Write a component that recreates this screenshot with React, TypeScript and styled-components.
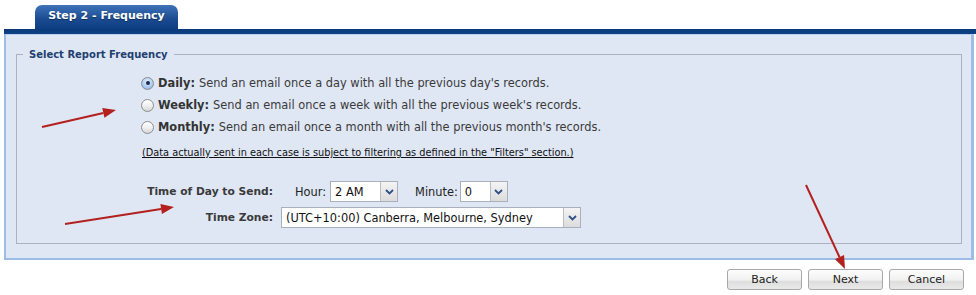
import React from "react";
import styled, { createGlobalStyle } from "styled-components";

const Global = createGlobalStyle`
  html, body { margin: 0; padding: 0; background: #ffffff; }
  body { font-family: "DejaVu Sans", Verdana, sans-serif; color: #333; }
  *, *::before, *::after { box-sizing: border-box; }
`;

const Page = styled.div`
  position: relative;
  width: 976px;
  height: 295px;
  overflow: hidden;
`;

const TabRow = styled.div`
  display: flex;
  padding: 5px 0 0 35px;
  height: 29px;
`;

const Tab = styled.div`
  width: 143px;
  height: 24px;
  border-radius: 7px 7px 0 0;
  background: linear-gradient(#3f72b9, #1a4b90 60%, #0d3d82);
  color: #fff;
  font-weight: bold;
  font-size: 11px;
  display: flex;
  align-items: center;
  justify-content: center;
  text-shadow: 0 1px 1px rgba(0, 0, 0, 0.4);
  padding-bottom: 3px;
`;

const Bar = styled.div`
  margin-left: 4px;
  height: 5px;
  background: linear-gradient(#0b3a78, #0d4186);
`;

const Panel = styled.div`
  margin: 0 2px 0 4px;
  background: #dfe7f5;
  border-left: 2px solid #9dbde9;
  border-right: 3px solid #9dbde9;
  border-bottom: 2px solid #9dbde9;
  border-top: 1px solid #b9cff0;
  padding: 14px 9px 14px 10px;
`;

const Fieldset = styled.fieldset`
  margin: 0;
  border: 1px solid #aab2c2;
  padding: 12px 0 15px 0;
  min-width: 0;
`;

const Legend = styled.legend`
  margin-left: 6px;
  padding: 0 6px;
  font-size: 10px;
  font-weight: bold;
  color: #22406f;
`;

const Options = styled.div`
  display: flex;
  flex-direction: column;
  padding-left: 124px;
`;

const OptionRow = styled.label`
  display: flex;
  align-items: center;
  height: 22px;
  font-size: 11.4px;
  color: #3a3a3a;
  white-space: nowrap;
`;

const Radio = styled.span<{ $checked?: boolean }>`
  position: relative;
  width: 13px;
  height: 13px;
  border-radius: 50%;
  border: 1px solid #8d8d8d;
  background: ${(p) =>
    p.$checked
      ? "radial-gradient(circle at 50% 35%, #e6f1ff, #9cc3ef 70%, #6f9fd8)"
      : "linear-gradient(#ffffff, #f0f0f0 50%, #d6d6d6)"};
  margin-right: 4px;
  flex: none;
  &::after {
    content: "";
    display: ${(p) => (p.$checked ? "block" : "none")};
    position: absolute;
    left: 3.5px;
    top: 3.5px;
    width: 4px;
    height: 4px;
    border-radius: 50%;
    background: #1b2a44;
  }
`;

const Strong = styled.b`
  margin-right: 4px;
  color: #333;
`;

const Note = styled.div`
  padding-left: 125px;
  margin-top: 9px;
  font-size: 9.75px;
  color: #111;
  text-decoration: underline;
  white-space: nowrap;
`;

const TimeGrid = styled.div`
  display: grid;
  grid-template-columns: 256px auto;
  column-gap: 8px;
  row-gap: 5px;
  margin-top: 23px;
  align-items: center;
`;

const FieldLabel = styled.div`
  text-align: right;
  font-size: 10.7px;
  font-weight: bold;
  color: #3a3a3a;
  white-space: nowrap;
`;

const Inline = styled.div`
  display: flex;
  align-items: center;
  font-size: 11.4px;
  color: #222;
`;

const SmallLabel = styled.span<{ $ml: number; $mr: number }>`
  margin-left: ${(p) => p.$ml}px;
  margin-right: ${(p) => p.$mr}px;
`;

const Select = styled.div<{ $w: number }>`
  width: ${(p) => p.$w}px;
  height: 21px;
  border: 1px solid #a9b0bb;
  background: #fff;
  display: flex;
  align-items: center;
  font-size: 11.4px;
  color: #111;
`;

const SelectText = styled.span`
  flex: 1;
  padding-left: 4px;
  white-space: nowrap;
  overflow: hidden;
`;

const SelectBtn = styled.span`
  width: 17px;
  height: 100%;
  border-left: 1px solid #b8bec8;
  background: linear-gradient(#f4f4f4, #dcdcdc);
  display: flex;
  align-items: center;
  justify-content: center;
`;

const Buttons = styled.div`
  display: flex;
  justify-content: flex-end;
  gap: 6px;
  padding: 9px 12px 0 0;
`;

const Button = styled.button`
  width: 75px;
  height: 21px;
  border: 1px solid #a8a8a8;
  border-radius: 3px;
  background: linear-gradient(#fdfdfd, #f0f0f0 55%, #dddddd 56%, #e9e9e9);
  font-family: "DejaVu Sans", sans-serif;
  font-size: 11px;
  color: #222;
  padding: 0;
`;

const Overlay = styled.svg`
  position: absolute;
  left: 0;
  top: 0;
  pointer-events: none;
`;

const Chevron = () => (
  <svg width="9" height="6" viewBox="0 0 9 6">
    <path d="M1 1 L4.5 4.5 L8 1" fill="none" stroke="#2d4f86" strokeWidth="1.8" />
  </svg>
);

const Arrow = ({ x1, y1, x2, y2 }: { x1: number; y1: number; x2: number; y2: number }) => {
  const a = Math.atan2(y2 - y1, x2 - x1);
  const len = 13;
  const w = 5;
  const bx = x2 - len * Math.cos(a);
  const by = y2 - len * Math.sin(a);
  const px = -Math.sin(a) * w;
  const py = Math.cos(a) * w;
  return (
    <g>
      <line x1={x1} y1={y1} x2={bx} y2={by} stroke="#b3201e" strokeWidth="2" />
      <polygon
        points={`${x2},${y2} ${bx + px},${by + py} ${bx - px},${by - py}`}
        fill="#b3201e"
      />
    </g>
  );
};

export default function App() {
  return (
    <Page>
      <Global />
      <TabRow>
        <Tab>Step 2 - Frequency</Tab>
      </TabRow>
      <Bar />
      <Panel>
        <Fieldset>
          <Legend>Select Report Frequency</Legend>
          <Options>
            <OptionRow>
              <Radio $checked />
              <Strong>Daily:</Strong>Send an email once a day with all the previous day's records.
            </OptionRow>
            <OptionRow>
              <Radio />
              <Strong>Weekly:</Strong>Send an email once a week with all the previous week's records.
            </OptionRow>
            <OptionRow>
              <Radio />
              <Strong>Monthly:</Strong>Send an email once a month with all the previous month's records.
            </OptionRow>
          </Options>
          <Note>
            (Data actually sent in each case is subject to filtering as defined in the "Filters" section.)
          </Note>
          <TimeGrid>
            <FieldLabel>Time of Day to Send:</FieldLabel>
            <Inline>
              <SmallLabel $ml={14} $mr={4}>Hour:</SmallLabel>
              <Select $w={68}>
                <SelectText>2 AM</SelectText>
                <SelectBtn>
                  <Chevron />
                </SelectBtn>
              </Select>
              <SmallLabel $ml={17} $mr={2}>Minute:</SmallLabel>
              <Select $w={48}>
                <SelectText>0</SelectText>
                <SelectBtn>
                  <Chevron />
                </SelectBtn>
              </Select>
            </Inline>
            <FieldLabel>Time Zone:</FieldLabel>
            <Inline>
              <Select $w={300}>
                <SelectText>(UTC+10:00) Canberra, Melbourne, Sydney</SelectText>
                <SelectBtn>
                  <Chevron />
                </SelectBtn>
              </Select>
            </Inline>
          </TimeGrid>
        </Fieldset>
      </Panel>
      <Buttons>
        <Button>Back</Button>
        <Button>Next</Button>
        <Button>Cancel</Button>
      </Buttons>
      <Overlay width="976" height="295">
        <Arrow x1={42} y1={127} x2={116} y2={110} />
        <Arrow x1={65} y1={224} x2={174} y2={207} />
        <Arrow x1={806} y1={185} x2={845} y2={269} />
      </Overlay>
    </Page>
  );
}
